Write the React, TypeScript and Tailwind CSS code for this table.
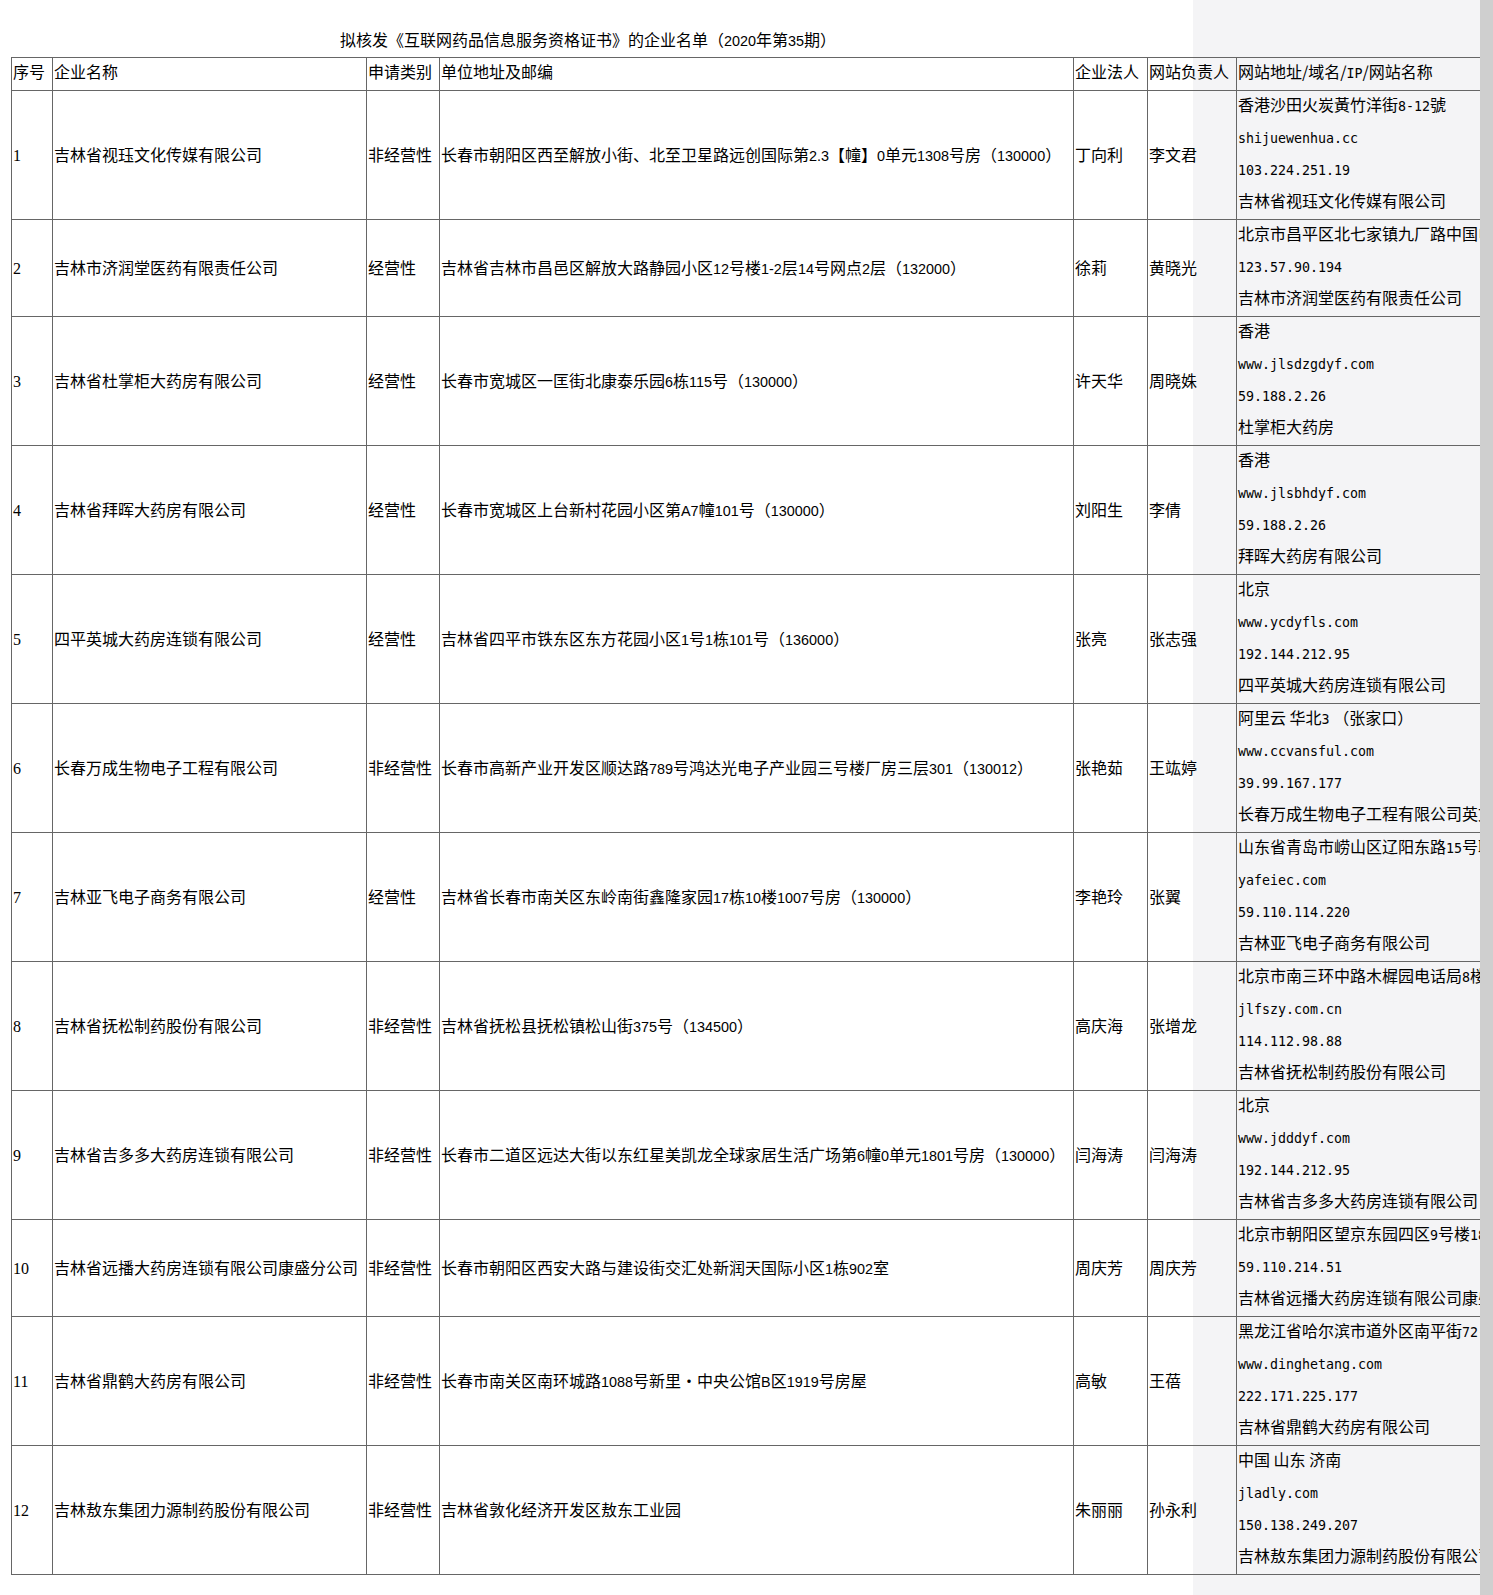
import React from 'react';

interface Company {
  no: string;
  name: string;
  kind: string;
  address: string;
  legal: string;
  webOwner: string;
  site: string[];
}

const companies: Company[] = [
  {
    no: '1',
    name: '吉林省视珏文化传媒有限公司',
    kind: '非经营性',
    address: '长春市朝阳区西至解放小街、北至卫星路远创国际第2.3【幢】0单元1308号房（130000）',
    legal: '丁向利',
    webOwner: '李文君',
    site: ['香港沙田火炭黃竹洋街8-12號', 'shijuewenhua.cc', '103.224.251.19', '吉林省视珏文化传媒有限公司'],
  },
  {
    no: '2',
    name: '吉林市济润堂医药有限责任公司',
    kind: '经营性',
    address: '吉林省吉林市昌邑区解放大路静园小区12号楼1-2层14号网点2层（132000）',
    legal: '徐莉',
    webOwner: '黄晓光',
    site: ['北京市昌平区北七家镇九厂路中国电信', '123.57.90.194', '吉林市济润堂医药有限责任公司'],
  },
  {
    no: '3',
    name: '吉林省杜掌柜大药房有限公司',
    kind: '经营性',
    address: '长春市宽城区一匡街北康泰乐园6栋115号（130000）',
    legal: '许天华',
    webOwner: '周晓姝',
    site: ['香港', 'www.jlsdzgdyf.com', '59.188.2.26', '杜掌柜大药房'],
  },
  {
    no: '4',
    name: '吉林省拜晖大药房有限公司',
    kind: '经营性',
    address: '长春市宽城区上台新村花园小区第A7幢101号（130000）',
    legal: '刘阳生',
    webOwner: '李倩',
    site: ['香港', 'www.jlsbhdyf.com', '59.188.2.26', '拜晖大药房有限公司'],
  },
  {
    no: '5',
    name: '四平英城大药房连锁有限公司',
    kind: '经营性',
    address: '吉林省四平市铁东区东方花园小区1号1栋101号（136000）',
    legal: '张亮',
    webOwner: '张志强',
    site: ['北京', 'www.ycdyfls.com', '192.144.212.95', '四平英城大药房连锁有限公司'],
  },
  {
    no: '6',
    name: '长春万成生物电子工程有限公司',
    kind: '非经营性',
    address: '长春市高新产业开发区顺达路789号鸿达光电子产业园三号楼厂房三层301（130012）',
    legal: '张艳茹',
    webOwner: '王竑婷',
    site: ['阿里云 华北3 （张家口）', 'www.ccvansful.com', '39.99.167.177', '长春万成生物电子工程有限公司英文网站'],
  },
  {
    no: '7',
    name: '吉林亚飞电子商务有限公司',
    kind: '经营性',
    address: '吉林省长春市南关区东岭南街鑫隆家园17栋10楼1007号房（130000）',
    legal: '李艳玲',
    webOwner: '张翼',
    site: ['山东省青岛市崂山区辽阳东路15号联通大厦', 'yafeiec.com', '59.110.114.220', '吉林亚飞电子商务有限公司'],
  },
  {
    no: '8',
    name: '吉林省抚松制药股份有限公司',
    kind: '非经营性',
    address: '吉林省抚松县抚松镇松山街375号（134500）',
    legal: '高庆海',
    webOwner: '张增龙',
    site: ['北京市南三环中路木樨园电话局8楼', 'jlfszy.com.cn', '114.112.98.88', '吉林省抚松制药股份有限公司'],
  },
  {
    no: '9',
    name: '吉林省吉多多大药房连锁有限公司',
    kind: '非经营性',
    address: '长春市二道区远达大街以东红星美凯龙全球家居生活广场第6幢0单元1801号房（130000）',
    legal: '闫海涛',
    webOwner: '闫海涛',
    site: ['北京', 'www.jdddyf.com', '192.144.212.95', '吉林省吉多多大药房连锁有限公司'],
  },
  {
    no: '10',
    name: '吉林省远播大药房连锁有限公司康盛分公司',
    kind: '非经营性',
    address: '长春市朝阳区西安大路与建设街交汇处新润天国际小区1栋902室',
    legal: '周庆芳',
    webOwner: '周庆芳',
    site: ['北京市朝阳区望京东园四区9号楼18层', '59.110.214.51', '吉林省远播大药房连锁有限公司康盛分公司'],
  },
  {
    no: '11',
    name: '吉林省鼎鹤大药房有限公司',
    kind: '非经营性',
    address: '长春市南关区南环城路1088号新里・中央公馆B区1919号房屋',
    legal: '高敏',
    webOwner: '王蓓',
    site: ['黑龙江省哈尔滨市道外区南平街72-1号', 'www.dinghetang.com', '222.171.225.177', '吉林省鼎鹤大药房有限公司'],
  },
  {
    no: '12',
    name: '吉林敖东集团力源制药股份有限公司',
    kind: '非经营性',
    address: '吉林省敦化经济开发区敖东工业园',
    legal: '朱丽丽',
    webOwner: '孙永利',
    site: ['中国 山东 济南', 'jladly.com', '150.138.249.207', '吉林敖东集团力源制药股份有限公司'],
  },
];

const LATIN = /^[0-9A-Za-z.\-/]+$/;

type Face = 'mono' | 'sans' | 'serif';

// half-width runs get a latin face so widths stay close to the original
function Mixed({ text, face = 'sans' }: { text: string; face?: Face }) {
  const parts = text.split(/([0-9A-Za-z.\-/]+)/);
  return (
    <>
      {parts.map((p, i) => {
        if (!p || !LATIN.test(p)) return <React.Fragment key={i}>{p}</React.Fragment>;
        if (face === 'mono')
          return (
            <span key={i} className="font-['DejaVu_Sans_Mono',monospace] text-[13.3px] leading-none">
              {p}
            </span>
          );
        if (face === 'serif')
          return (
            <span key={i} className="font-['Liberation_Serif',serif] text-[16px] leading-none">
              {p}
            </span>
          );
        return (
          <span key={i} className="font-['Liberation_Sans',sans-serif] text-[14.4px] leading-none">
            {p}
          </span>
        );
      })}
    </>
  );
}

const cell = 'border border-[#666666] px-[1px] pt-0 align-middle text-left font-normal';
const head = `${cell} leading-[26px] pb-[6px]`;
const body = `${cell} leading-[32px] pb-[3px]`;

export default function App() {
  return (
    <div className="flex min-h-[1595px] bg-white text-[16px] leading-[32px] text-black font-['Noto_Sans_CJK_SC',sans-serif]">
      <div className="w-[1480px] shrink-0 overflow-hidden bg-[linear-gradient(to_right,#ffffff_1193px,#f4f4f6_1193px)]">
        <div className="h-[57px] pl-[340px] pt-[27px] leading-[24px] whitespace-nowrap">
          拟核发《互联网药品信息服务资格证书》的企业名单（<Mixed text="2020" />年第<Mixed text="35" />期）
        </div>
        <table className="ml-[11px] w-[1686px] table-fixed border-collapse">
          <colgroup>
            <col className="w-[41px]" />
            <col className="w-[314px]" />
            <col className="w-[73px]" />
            <col className="w-[634px]" />
            <col className="w-[74px]" />
            <col className="w-[89px]" />
            <col className="w-[461px]" />
          </colgroup>
          <thead>
            <tr>
              <th className={head}>序号</th>
              <th className={head}>企业名称</th>
              <th className={head}>申请类别</th>
              <th className={head}>单位地址及邮编</th>
              <th className={head}>企业法人</th>
              <th className={head}>网站负责人</th>
              <th className={`${head} whitespace-nowrap`}>
                网站地址/域名/<Mixed text="IP" face="mono" />/网站名称
              </th>
            </tr>
          </thead>
          <tbody>
            {companies.map((c) => (
              <tr key={c.no}>
                <td className={body}>
                  <Mixed text={c.no} face="serif" />
                </td>
                <td className={body}>{c.name}</td>
                <td className={body}>{c.kind}</td>
                <td className={`${body} whitespace-nowrap`}>
                  <Mixed text={c.address} />
                </td>
                <td className={body}>{c.legal}</td>
                <td className={body}>{c.webOwner}</td>
                <td className={`${cell} pb-0 whitespace-nowrap`}>
                  {c.site.map((line, i) => (
                    <div key={i} className="h-[32px] leading-[26px]">
                      <Mixed text={line} face="mono" />
                    </div>
                  ))}
                </td>
              </tr>
            ))}
          </tbody>
        </table>
      </div>
      <div className="w-[13px] shrink-0 bg-[#cfcfcf]" />
    </div>
  );
}
